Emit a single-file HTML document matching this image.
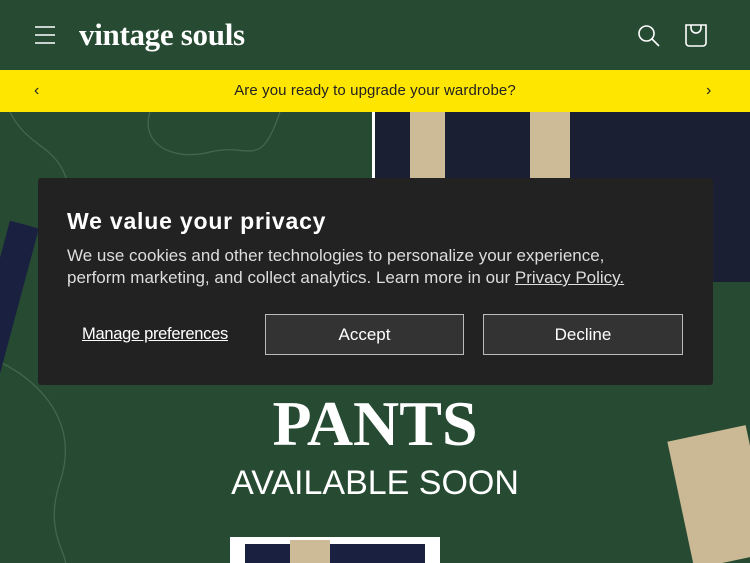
<!DOCTYPE html>
<html><head><meta charset="utf-8"><style>
*{margin:0;padding:0;box-sizing:border-box}
html,body{width:750px;height:563px;overflow:hidden}
body{background:#264b32;font-family:"Liberation Sans",sans-serif;position:relative}
.hdr{position:absolute;top:0;left:0;width:750px;height:70px;background:#264b32}
.logo{position:absolute;left:79px;top:17px;font-family:"Liberation Serif",serif;font-size:31px;font-weight:bold;color:#fff;letter-spacing:-0.3px}
.bar{position:absolute;top:70px;left:0;width:750px;height:42px;background:#ffe600;text-align:center;font-size:15px;line-height:42px;color:#222;letter-spacing:0.1px}
.hero{position:absolute;top:112px;left:0;width:750px;height:451px;background:#264b32;overflow:hidden}
.modal{position:absolute;left:38px;top:178px;width:675px;height:207px;background:#222;border-radius:3px}
.modal h2{position:absolute;left:29px;top:30px;font-size:23px;color:#fff;font-weight:bold;letter-spacing:0.8px}
.modal p{position:absolute;left:29px;top:67px;width:575px;font-size:17px;line-height:22px;color:#ddd;letter-spacing:0}
.modal a{color:#ddd}
.btn{position:absolute;top:136px;height:41px;border:1px solid #bbb;background:#333;color:#fff;font-size:17px;text-align:center;line-height:39px}
.mp{position:absolute;left:44px;top:147px;color:#fff;font-size:16.5px;letter-spacing:-0.3px;text-decoration:underline}
</style></head><body>
<div class="hdr">
<svg style="position:absolute;left:34px;top:25px" width="22" height="20"><path d="M1 2h20M1 10h20M1 18h20" stroke="#fff" stroke-width="1.6"/></svg>
<div class="logo">vintage souls</div>
<svg style="position:absolute;left:637px;top:24px" width="24" height="24"><circle cx="9.5" cy="9.5" r="7.5" stroke="#fff" stroke-width="1.6" fill="none"/><path d="M15 15l7 7" stroke="#fff" stroke-width="1.6"/></svg>
<svg style="position:absolute;left:684px;top:23px" width="24" height="25"><path d="M2 2h20v18a3 3 0 0 1-3 3H5a3 3 0 0 1-3-3z" stroke="#fff" stroke-width="1.6" fill="none"/><path d="M7 2v3a5 5 0 0 0 10 0V2" stroke="#fff" stroke-width="1.6" fill="none"/></svg>
</div>
<div class="bar">Are you ready to upgrade your wardrobe?
<span style="position:absolute;left:34px;top:0;font-size:16px">‹</span><span style="position:absolute;left:706px;top:0;font-size:16px">›</span></div>
<div class="hero">
<svg style="position:absolute;left:0;top:0" width="750" height="451"><g stroke="#4a6f52" fill="none" stroke-width="1.3" opacity=".8"><path d="M10 0c20 40 50 30 60 80s-30 60-20 100"/><path d="M150 0c-10 30 20 50 60 40s50 20 70 -40"/><ellipse cx="85" cy="150" rx="8" ry="22" transform="rotate(-20 85 150)"/><ellipse cx="110" cy="150" rx="8" ry="20" transform="rotate(-20 110 150)"/><path d="M0 250c40 20 80 60 60 120s20 80 0 90"/><path d="M720 320c-30 20-20 60 10 80"/></g></svg>
<div style="position:absolute;left:372px;top:0;width:378px;height:170px;background:#1a1f33;border-left:3px solid #fff"></div>
<div style="position:absolute;left:410px;top:0;width:35px;height:170px;background:#cdbb98"></div>
<div style="position:absolute;left:530px;top:0;width:40px;height:170px;background:#cdbb98"></div>
<div style="position:absolute;left:-10px;top:110px;width:30px;height:150px;background:#1a2040;transform:rotate(15deg)"></div>
<div style="position:absolute;left:680px;top:320px;width:80px;height:130px;background:#cbb894;transform:rotate(-12deg)"></div>
<div style="position:absolute;left:230px;top:425px;width:210px;height:26px;background:#fff"></div>
<div style="position:absolute;left:245px;top:432px;width:180px;height:19px;background:#1a2040"></div>
<div style="position:absolute;left:290px;top:428px;width:40px;height:23px;background:#cdbb98"></div>
<div style="position:absolute;left:0;top:275px;width:750px;text-align:center;font-family:'Liberation Serif',serif;font-weight:bold;font-size:64px;color:#fff;letter-spacing:0">PANTS</div>
<div style="position:absolute;left:0;top:352px;width:750px;text-align:center;font-size:34px;color:#fff">AVAILABLE SOON</div>
</div>
<div class="modal">
<h2>We value your privacy</h2>
<p>We use cookies and other technologies to personalize your experience, perform marketing, and collect analytics. Learn more in our <a href="#">Privacy Policy.</a></p>
<div class="mp">Manage preferences</div>
<div class="btn" style="left:227px;width:199px">Accept</div>
<div class="btn" style="left:445px;width:200px">Decline</div>
</div>
</body></html>
